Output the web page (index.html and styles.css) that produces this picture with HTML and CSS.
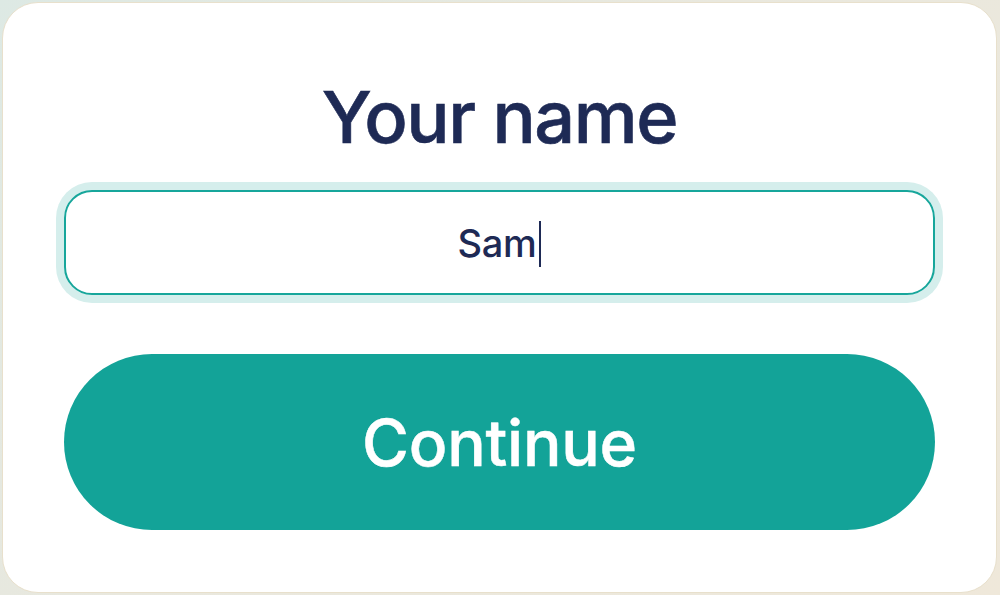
FILE: index.html
```html
<!DOCTYPE html>
<html lang="en">
<head>
<meta charset="utf-8">
<title>Your name</title>
<link rel="stylesheet" href="styles.css">
</head>
<body>
<main class="card">
  <h1 class="title">Your name</h1>
  <div class="field">
    <span class="value">Sam</span><span class="caret"></span>
  </div>
  <button class="cta" type="button">Continue</button>
</main>
</body>
</html>
```

FILE: styles.css
```css
html, body {
  margin: 0;
  height: 100%;
}
body {
  background: linear-gradient(135deg, #dde9e4 0%, #e9e8de 45%, #efe8da 100%);
  font-family: Inter, "Noto Sans", sans-serif;
  padding: 2px 3px 2px 2px;
  box-sizing: border-box;
}
.card {
  box-sizing: border-box;
  height: 100%;
  background: #ffffff;
  border: 1.5px solid #e8e0cc;
  border-radius: 36px;
  padding: 78px 61px 61px 61px;
  display: flex;
  flex-direction: column;
  align-items: stretch;
}
.title {
  margin: 0 0 37px;
  font-size: 72px;
  line-height: 72px;
  font-weight: 500;
  color: #1e2a55;
  text-align: center;
  letter-spacing: -1.4px;
  -webkit-text-stroke: 0.6px #1e2a55;
}
.field {
  height: 105px;
  box-sizing: border-box;
  border: 2px solid #17a69b;
  border-radius: 28px;
  box-shadow: 0 0 0 8px #d5eeec;
  display: flex;
  align-items: center;
  justify-content: center;
  color: #1e2a55;
  font-size: 38px;
  font-weight: 500;
}
.value {
  line-height: 1;
  letter-spacing: -0.3px;
}
.caret {
  width: 2px;
  height: 46px;
  background: #1e2a55;
  margin-left: 3px;
  margin-top: 2px;
}
.cta {
  margin-top: 59px;
  height: 176px;
  border: none;
  border-radius: 88px;
  background: #13a398;
  color: #ffffff;
  font-family: inherit;
  font-size: 64px;
  font-weight: 500;
  letter-spacing: -0.2px;
  -webkit-text-stroke: 0.5px #ffffff;
  padding: 0;
}
```
